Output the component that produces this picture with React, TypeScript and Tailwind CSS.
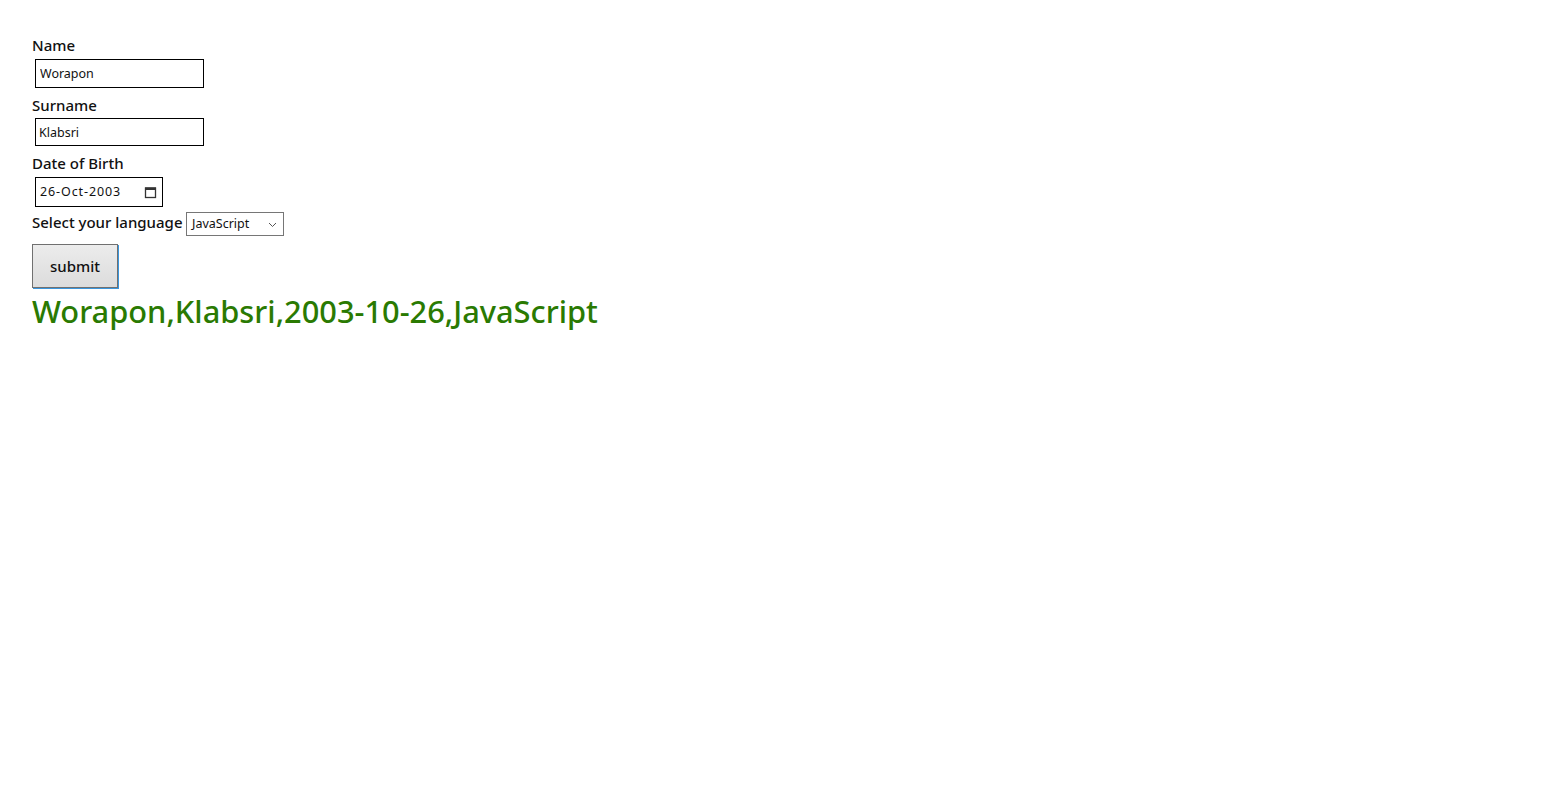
import { useState } from "react";

export default function App() {
  const [name, setName] = useState("Worapon");
  const [surname, setSurname] = useState("Klabsri");
  const [dob, setDob] = useState("2003-10-26");
  const [lang, setLang] = useState("JavaScript");

  return (
    <div className="min-h-screen bg-white pl-8 pt-[35px] text-[15px] text-[#111] font-['Noto_Sans',sans-serif]">
      <label className="block font-medium leading-[20px]">Name</label>
      <input
        className="ml-[3px] mt-[4px] block h-[29px] w-[169px] border border-black px-[4px] text-[12.5px] outline-none"
        value={name}
        onChange={(e) => setName(e.target.value)}
      />
      <label className="mt-[7px] block font-medium leading-[20px]">Surname</label>
      <input
        className="ml-[3px] mt-[3px] block h-[28px] w-[169px] border border-black px-[3px] text-[12.5px] outline-none"
        value={surname}
        onChange={(e) => setSurname(e.target.value)}
      />
      <label className="mt-[7px] block font-medium leading-[20px]">Date of Birth</label>
      <div className="ml-[3px] mt-[4px] flex h-[30px] w-[128px] items-center justify-between border border-black pl-[4px] pr-[5px] pt-[1px] text-[12.5px] tracking-[0.9px]">
        <span>26-Oct-2003</span>
        <svg width="13" height="13" viewBox="0 0 13 13" className="text-[#333]">
          <rect x="1.5" y="2" width="10" height="9.5" fill="none" stroke="currentColor" strokeWidth="1.3" />
          <rect x="1" y="1.5" width="11" height="2.5" fill="currentColor" />
        </svg>
        <input type="hidden" value={dob} onChange={(e) => setDob(e.target.value)} />
      </div>
      <div className="mt-[5px] flex items-start gap-[3px]">
        <span className="w-[151px] font-medium leading-[20px]">Select your language</span>
        <div className="relative flex h-[24px] w-[98px] items-center border border-[#767676] pl-[5px] text-[12.5px]">
          <span>{lang}</span>
          <svg width="9" height="6" viewBox="0 0 9 6" className="absolute right-[6px] top-[9px]">
            <path d="M1 1l3.5 3.5L8 1" fill="none" stroke="#555" strokeWidth="1" />
          </svg>
          <select
            className="absolute inset-0 opacity-0"
            value={lang}
            onChange={(e) => setLang(e.target.value)}
          >
            <option>JavaScript</option>
            <option>Python</option>
            <option>Java</option>
          </select>
        </div>
      </div>
      <button className="mt-[8px] block h-[44px] w-[86px] border border-[#707070] bg-gradient-to-b from-[#ececec] to-[#dcdcdc] text-[15px] font-medium text-[#111] shadow-[1px_1px_0_#3a96dd]">
        submit
      </button>
      <div className="mt-[5px] text-[30.8px] font-medium leading-[36px] text-[#2a7a02]">
        {name},{surname},{dob},{lang}
      </div>
    </div>
  );
}
